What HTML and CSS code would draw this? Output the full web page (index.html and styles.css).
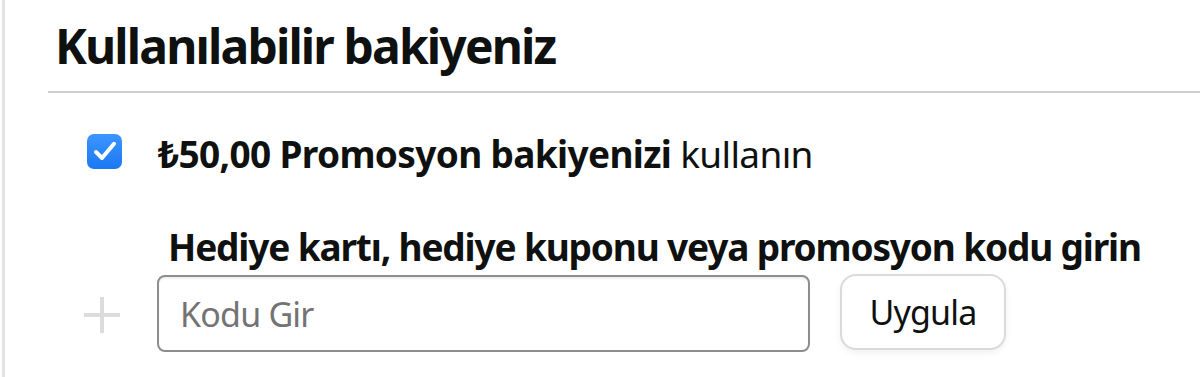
FILE: index.html
```html
<!DOCTYPE html>
<html lang="tr">
<head>
<meta charset="utf-8">
<title>Kullanılabilir bakiyeniz</title>
<link rel="stylesheet" href="styles.css">
</head>
<body>
<div class="panel">
  <h2 class="title">Kullanılabilir bakiyeniz</h2>
  <div class="divider"></div>
  <label class="balance">
    <span class="check">
      <svg viewBox="0 0 24 24" width="30" height="30"><path d="M4.8 12.8 L9.6 17.6 L19.2 6.2" fill="none" stroke="#fff" stroke-width="3.2" stroke-linecap="round" stroke-linejoin="round"/></svg>
    </span>
    <span class="balance-text"><b>₺50,00 Promosyon bakiyenizi</b> kullanın</span>
  </label>
  <div class="code">
    <div class="code-label">Hediye kartı, hediye kuponu veya promosyon kodu girin</div>
    <div class="code-row">
      <span class="plus">
        <svg viewBox="0 0 36 40" width="36" height="40"><path d="M0 20 H36 M18 2 V38" stroke="#dcdcdc" stroke-width="4"/></svg>
      </span>
      <input class="code-input" type="text" placeholder="Kodu Gir">
      <button class="apply" type="button">Uygula</button>
    </div>
  </div>
</div>
</body>
</html>
```
FILE: styles.css
```css
html, body {
  margin: 0;
  background: #fff;
}
body {
  font-family: "Noto Sans", "Liberation Sans", sans-serif;
  color: #0f1111;
}
.panel {
  margin-left: 2px;
  border-left: 3px solid #e3e3e3;
  height: 377px;
  box-sizing: border-box;
  padding-top: 18px;
}
.title {
  margin: 0 0 0 50px;
  font-size: 48px;
  line-height: 56px;
  font-weight: 700;
  letter-spacing: -1.85px;
}
.divider {
  margin: 17px 0 0 43px;
  border-top: 2px solid #cfcfcf;
}
.balance {
  display: flex;
  align-items: center;
  margin: 30px 0 0 82px;
}
.check {
  width: 35px;
  height: 35px;
  border-radius: 7px;
  background: linear-gradient(#3d95ff, #1a78f2);
  display: flex;
  align-items: center;
  justify-content: center;
  flex: none;
}
.balance-text {
  margin-left: 36px;
  font-size: 37px;
  letter-spacing: -0.65px;
  line-height: 50px;
  padding-top: 6px;
}
.balance-text b {
  font-weight: 700;
}
.code {
  margin: 46px 0 0 0;
}
.code-label {
  margin-left: 163px;
  font-size: 37px;
  font-weight: 700;
  letter-spacing: -1.15px;
  line-height: 44px;
}
.code-row {
  display: flex;
  align-items: center;
  margin-top: 0;
}
.plus {
  margin-left: 79px;
  width: 36px;
  height: 40px;
  display: flex;
  margin-top: 8px;
}
.code-input {
  margin-left: 37px;
  width: 653px;
  height: 77px;
  box-sizing: border-box;
  border: 2px solid #8d8d8d;
  border-radius: 8px;
  padding: 0 0 0 21px;
  font-family: inherit;
  font-size: 34px;
  letter-spacing: -0.8px;
  color: #0f1111;
  margin-top: 6px;
  box-shadow: inset 0 2px 2px rgba(0,0,0,0.06);
}
.code-input::placeholder {
  color: #737373;
}
.apply {
  margin-left: 30px;
  width: 166px;
  height: 76px;
  box-sizing: border-box;
  border: 2px solid #dadada;
  border-radius: 16px;
  background: #fff;
  font-family: inherit;
  font-size: 34px;
  letter-spacing: -0.8px;
  color: #0f1111;
  box-shadow: 0 3px 6px rgba(0,0,0,0.06);
  padding: 0;
  margin-top: 2px;
}
```
